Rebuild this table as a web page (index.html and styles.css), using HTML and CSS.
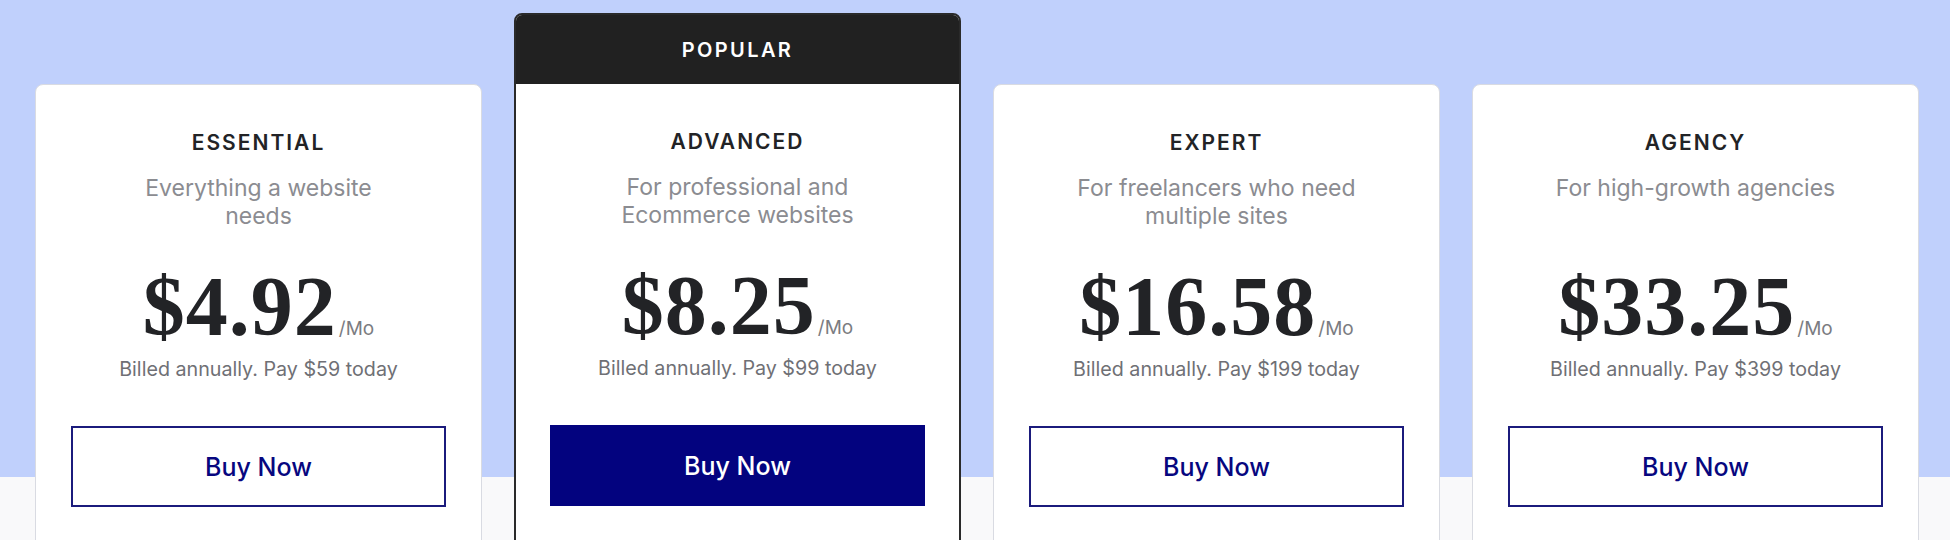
FILE: index.html
```html
<!DOCTYPE html>
<html lang="en">
<head>
<meta charset="utf-8">
<title>Pricing</title>
<link rel="stylesheet" href="styles.css">
</head>
<body>
<main class="page">
  <section class="plans">
    <article class="plan">
      <div class="plan-body">
        <h2 class="plan-name">ESSENTIAL</h2>
        <p class="plan-desc">Everything a website<br>needs</p>
        <div class="price"><span class="amount">$4.92</span><span class="per">/Mo</span></div>
        <p class="billed">Billed annually. Pay $59 today</p>
        <a class="buy" href="#">Buy Now</a>
      </div>
    </article>
    <article class="plan plan-popular">
      <div class="plan-badge">POPULAR</div>
      <div class="plan-body">
        <h2 class="plan-name">ADVANCED</h2>
        <p class="plan-desc">For professional and<br>Ecommerce websites</p>
        <div class="price"><span class="amount">$8.25</span><span class="per">/Mo</span></div>
        <p class="billed">Billed annually. Pay $99 today</p>
        <a class="buy buy-filled" href="#">Buy Now</a>
      </div>
    </article>
    <article class="plan">
      <div class="plan-body">
        <h2 class="plan-name">EXPERT</h2>
        <p class="plan-desc">For freelancers who need<br>multiple sites</p>
        <div class="price"><span class="amount">$16.58</span><span class="per">/Mo</span></div>
        <p class="billed">Billed annually. Pay $199 today</p>
        <a class="buy" href="#">Buy Now</a>
      </div>
    </article>
    <article class="plan">
      <div class="plan-body">
        <h2 class="plan-name">AGENCY</h2>
        <p class="plan-desc">For high-growth agencies</p>
        <div class="price"><span class="amount">$33.25</span><span class="per">/Mo</span></div>
        <p class="billed">Billed annually. Pay $399 today</p>
        <a class="buy" href="#">Buy Now</a>
      </div>
    </article>
  </section>
</main>
</body>
</html>
```
FILE: styles.css
```css
* { box-sizing: border-box; }
html, body { margin: 0; padding: 0; }
body {
  font-family: Inter, "Noto Sans", sans-serif;
  background: #f9f9fa;
  height: 540px;
  overflow: hidden;
}
.page {
  background: linear-gradient(to bottom, #c0d0fc 0, #c0d0fc 477px, #f9f9fa 477px);
  height: 540px;
  overflow: hidden;
}
.plans {
  display: flex;
  align-items: flex-end;
  gap: 32px;
  padding: 13px 31px 0 35px;
}
.plan {
  flex: 0 0 447px;
  background: #fff;
  border: 1px solid #d9dbe2;
  border-radius: 8px 8px 0 0;
  overflow: hidden;
}
.plan-popular {
  border: 2px solid #2a2a2a;
}
.plan-badge {
  height: 69px;
  background: #212121;
  color: #fff;
  font-size: 20px;
  font-weight: 600;
  letter-spacing: 2.4px;
  display: flex;
  align-items: center;
  justify-content: center;
}
.plan-body {
  display: flex;
  flex-direction: column;
  align-items: center;
  text-align: center;
  padding: 44px 35px 60px;
}
.plan-popular .plan-body { padding-left: 34px; padding-right: 34px; }
.plan-name {
  margin: 0;
  font-size: 21px;
  line-height: 28px;
  font-weight: 600;
  letter-spacing: 2px;
  color: #222326;
}
.plan-desc {
  margin: 17px 0 0;
  min-height: 56px;
  font-size: 23px;
  line-height: 28px;
  color: #8b8c91;
}
.price {
  margin-top: 35px;
  display: flex;
  align-items: baseline;
  justify-content: center;
  color: #222326;
}
.amount {
  font-family: "Liberation Serif", "Times New Roman", serif;
  font-weight: 700;
  font-size: 84px;
  line-height: 84px;
  letter-spacing: 1px;
}
.per {
  font-size: 19px;
  line-height: 22px;
  color: #7b7c81;
  margin-left: 2px;
}
.billed {
  margin: 7px 0 0;
  font-size: 19.7px;
  line-height: 26px;
  color: #6f7075;
}
.buy {
  margin-top: 44px;
  align-self: stretch;
  height: 81px;
  border: 2px solid #1b1b7c;
  display: flex;
  align-items: center;
  justify-content: center;
  font-size: 25px;
  font-weight: 500;
  color: #07077f;
  text-decoration: none;
}
.buy-filled {
  background: #03037f;
  border-color: #03037f;
  color: #fff;
}
```
